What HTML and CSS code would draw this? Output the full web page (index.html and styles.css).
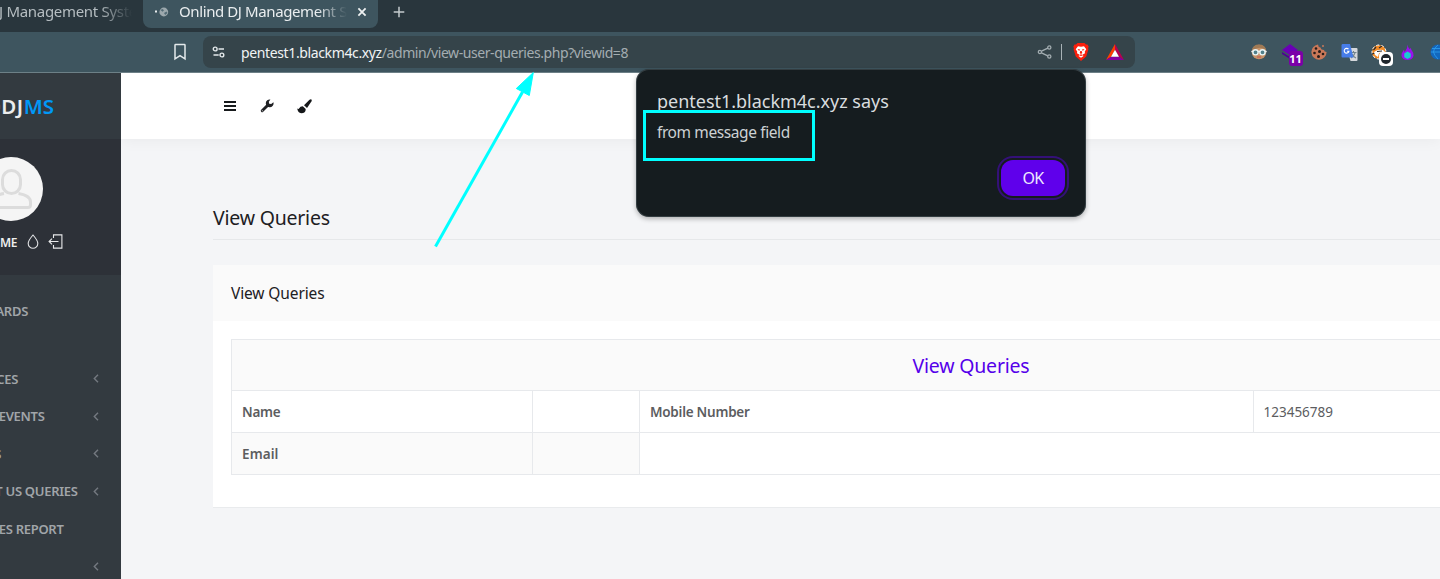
FILE: index.html
```html
<!DOCTYPE html>
<html lang="en">
<head>
<meta charset="utf-8">
<title>View Queries</title>
<link rel="stylesheet" href="styles.css">
</head>
<body>
<header class="tabs">
  <div class="tab tab-back"><span class="tab-back-title">J Management Syste</span></div>
  <div class="tab tab-active">
    <svg class="favicon" width="16" height="14" viewBox="0 0 16 14"><rect x="1" y="5.5" width="2" height="2" fill="#e8ecee"/><circle cx="9.8" cy="7" r="4.4" fill="#9ca8ad"/><path d="M6.5 5l2-1 1.5 1.3-1.5 1.5zM10 8l2.5-1.5 1 1.5-2.3 2zM9 10l1 .8" fill="#526b75"/></svg>
    <span class="tab-title">Onlind DJ Management S</span>
    <svg class="close" width="10" height="10" viewBox="0 0 10 10"><path d="M1.4 1.4l7.2 7.2M8.6 1.4L1.4 8.6" stroke="#eef1f2" stroke-width="1.8"/></svg>
  </div>
  <svg class="plus" width="12" height="12" viewBox="0 0 12 12"><path d="M6 .7v10.6M.7 6h10.6" stroke="#c3cacd" stroke-width="1.5"/></svg>
</header>
<div class="toolbar">
  <svg class="bookmark" width="14" height="18" viewBox="0 0 14 18"><path d="M2.6 1.6h8.8q.6 0 .6.6v13.6L7 12.6l-5 3.2V2.2q0-.6.6-.6z" fill="none" stroke="#e4e9eb" stroke-width="1.5"/></svg>
  <div class="address">
    <svg class="tune" width="14" height="14" viewBox="0 0 14 14" fill="none" stroke="#e4e9eb" stroke-width="1.4"><circle cx="3.2" cy="4" r="1.9"/><path d="M6.5 4H12M1.5 10h5.2"/><circle cx="9.9" cy="10" r="1.9"/></svg>
    <span class="url"><span class="host">pentest1.blackm4c.xyz</span><span class="path">/admin/view-user-queries.php?viewid=8</span></span>
    <svg class="share" width="16" height="16" viewBox="0 0 16 16" fill="none" stroke="#a3adb1" stroke-width="1.3"><path d="M4.5 7.2l6.3-3M4.5 8.8l6.3 3"/><circle cx="2.9" cy="8" r="1.6"/><circle cx="12.3" cy="3.5" r="1.6"/><circle cx="12.3" cy="12.5" r="1.6"/></svg>
    <i class="divider"></i>
    <svg class="brave" width="16" height="18" viewBox="0 0 16 18"><path d="M4.5 0h7l1.5 1.5 1.5-.1 1.2 2.3-.6 1.3.3 1.5-2.2 7L8 18l-5.200-4.500-2.200-7L.9 5 .3 3.700l1.200-2.300 1.500.1z" fill="#fb1f0c"/><path d="M5 3.200l3 .6 3-.6 2.300 3-1.500 2.300.2 1.700-2.600 1.600L10.500 13 8 14.800 5.500 13l1.100-1.200L4 10.200l.2-1.700L2.700 6.200z" fill="#fff"/><path d="M4.500 6l2.600.6-1 1.500zM11.500 6l-2.600.6 1 1.500zM7.300 8h1.400l.6 2L8 11l-1.300-1zM6 12.300l2-1 2 1-2 .6z" fill="#fb1f0c"/></svg>
    <svg class="bat" width="18" height="16" viewBox="0 0 18 16"><path d="M9 0L0 16l5-3.200 4-7z" fill="#ff3d00"/><path d="M9 0l9 16-5-3.200-4-7z" fill="#b8004f"/><path d="M0 16h18l-5-3.200H5z" fill="#8500a0"/><path d="M9 5.700l4 7.100H5z" fill="#fff"/></svg>
  </div>
  <div class="extensions">
    <svg width="16" height="16" viewBox="0 0 16 16"><circle cx="8" cy="8" r="7.300" fill="#c79369"/><path d="M1 6Q2 .5 8 .5T15 6Q10 3 7 4T1 6z" fill="#a07a55"/><path d="M.3 7.500h15.400" stroke="#eee" stroke-width="1.300"/><circle cx="4.500" cy="8.300" r="2.600" fill="#51808b" stroke="#e8f4f6" stroke-width="1.400"/><circle cx="11.500" cy="8.300" r="2.600" fill="#51808b" stroke="#e8f4f6" stroke-width="1.400"/><path d="M6 13h4" stroke="#c35252"/></svg>
    <div class="stack"><svg width="18" height="16" viewBox="0 0 18 16"><path d="M9 0l8 6-8 5-8-5z" fill="#6a00b5"/><path d="M1 8l8 5 8-5v2l-8 5-8-5z" fill="#4e0094"/></svg><b class="badge">11</b></div>
    <svg width="16" height="16" viewBox="0 0 16 16"><path d="M7 .5Q7 3 9.500 3.500 10 6 13 6q0 2 2.600 2A7.600 7.600 0 1 1 7 .5z" fill="#c97858"/><circle cx="12" cy="2" r="1" fill="#c97858"/><g fill="#271b19"><circle cx="5" cy="4.500" r="1.300"/><circle cx="8.500" cy="7.500" r="1.500"/><circle cx="3.500" cy="9" r="1.300"/><circle cx="12" cy="10" r="1.300"/><circle cx="7.500" cy="12.500" r="1.500"/></g></svg>
    <svg width="17" height="17" viewBox="0 0 17 17"><path d="M6 4h9.500q1 0 1 1v11q0 1-1 1H9.500z" fill="#d5d8dc"/><path d="M9.500 8.500h6M12.500 7v1.500M14 9q-1 3-4 5M11 10q1 2.500 4 4" fill="none" stroke="#71838b" stroke-width="1.100"/><path d="M1.500 0H9l3.500 13.500h-11q-1 0-1-1v-11Q.5 0 1.500 0z" fill="#477de9"/><path d="M7.500 5.200a2.400 2.400 0 1 0 .5 2H6" fill="none" stroke="#fff" stroke-width="1.100"/></svg>
    <div class="blocker"><svg width="16" height="16" viewBox="0 0 16 16"><circle cx="8" cy="8" r="7" fill="#f28a24" stroke="#fff" stroke-dasharray="3 2"/><path d="M2.500 6l2.500-3M8 4l3-2M1 10l3-1" fill="none" stroke="#282828" stroke-width="1.200"/><path d="M3 8q4-3 9-2l2 2-6 1-1 4-3-2z" fill="#fff"/><path d="M6 7.500l5-.5" stroke="#282828"/></svg><i class="stop"></i></div>
    <svg width="13" height="17" viewBox="0 0 14 17"><path d="M7 0q0 2.500 2.500 5l1-1.500q.3 2 1.500 3.500 2 2.500 1.500 5Q12.500 16.500 7 16.500T.5 12Q.3 9.500 2 7.500l1-2 1 2.500Q7.500 4 7 0z" fill="#9a10ed"/><path d="M7 7.500l3.500 2v4L7 15.500l-3.500-2v-4z" fill="#19cbd0"/></svg>
    <svg class="globe" width="16" height="16" viewBox="0 0 16 16"><circle cx="8" cy="8" r="7.500" fill="#1267bd"/><path d="M2 4.500h12M1 8h14M8 1Q3 5 3.500 8T8 15" fill="none" stroke="#2c9bea" stroke-width=".9"/></svg>
  </div>
</div>
<div class="page">
  <aside class="sidebar">
    <div class="brand"><span class="brand-text">ODJ<em>MS</em></span></div>
    <div class="profile">
      <div class="avatar"><svg width="64" height="64" viewBox="0 0 64 64" fill="none" stroke="#dcdcdc" stroke-width="3"><rect x="23.500" y="13.500" width="18" height="23" rx="9"/><path d="M25 36.500Q12.500 38.500 12.500 45v3q0 2.500 2.500 2.500h34q2.500 0 2.500-2.500v-3q0-6.500-12-8.500"/></svg></div>
      <div class="profile-links">
        <b class="home">ME</b>
        <svg width="12" height="15" viewBox="0 0 12 15"><path d="M6 1Q1.200 6.500 1.200 9.500a4.700 4.700 0 0 0 9.600 0Q10.800 6.500 6 1z" fill="none" stroke="#e2e3e5" stroke-width="1.100"/></svg>
        <svg width="15" height="15" viewBox="0 0 15 15"><path d="M5.500 4V.9h8.400v13.200H5.500V11M10.500 7.500H1M4 4.700L1.100 7.500 4 10.300" fill="none" stroke="#e8e9ea" stroke-width="1.100"/></svg>
      </div>
    </div>
    <nav class="menu">
      <div class="item item-first"><span class="label label-boards">ARDS</span></div>
      <div class="item"><span class="label label-services">CES</span><svg class="chev" width="6" height="9" viewBox="0 0 6 9"><path d="M5 .8L1.300 4.500 5 8.200"/></svg></div>
      <div class="item"><span class="label label-events">EVENTS</span><svg class="chev" width="6" height="9" viewBox="0 0 6 9"><path d="M5 .8L1.300 4.500 5 8.200"/></svg></div>
      <div class="item"><span class="label label-short">S</span><svg class="chev" width="6" height="9" viewBox="0 0 6 9"><path d="M5 .8L1.300 4.500 5 8.200"/></svg></div>
      <div class="item"><span class="label label-contact">T US QUERIES</span><svg class="chev" width="6" height="9" viewBox="0 0 6 9"><path d="M5 .8L1.300 4.500 5 8.200"/></svg></div>
      <div class="item"><span class="label label-report">ES REPORT</span></div>
      <div class="item"><svg class="chev" width="6" height="9" viewBox="0 0 6 9"><path d="M5 .8L1.300 4.500 5 8.200"/></svg></div>
    </nav>
  </aside>
  <main class="main">
    <div class="topbar">
      <svg width="12" height="12" viewBox="0 0 12 12"><path d="M0 2h12M0 6h12M0 10h12" stroke="#171a1c" stroke-width="2"/></svg>
      <svg width="14" height="14" viewBox="0 0 14 14"><path d="M2.200 11.800L8 6" stroke="#202124" stroke-width="2.900" stroke-linecap="round"/><path d="M13.400 3.200a3.900 3.900 0 1 1-3-2.700L8.800 2.700l.4 2 2 .4z" fill="#202124"/><circle cx="2.300" cy="11.700" r=".5" fill="#fff"/></svg>
      <svg class="brush" width="15" height="15" viewBox="0 0 15 15"><path d="M14.400.4q.7.6 0 2L10 9 7 6.200 12.500.8q1.100-1 1.900-.4z" fill="#151719"/><path d="M5.800 7.200l2.900 2.700q.1 4.300-4.500 4.300Q1 14 .2 9.500q1.500 1 2-.2.900-2.100 3.600-2.100z" fill="#151719"/></svg>
    </div>
    <div class="content">
      <h1 class="page-title">View Queries</h1>
      <section class="panel">
        <h2 class="panel-title">View Queries</h2>
        <div class="panel-body">
          <div class="grid">
            <div class="cell cell-head">View Queries</div>
            <div class="cell cell-label">Name</div><div class="cell"></div><div class="cell cell-label">Mobile Number</div><div class="cell cell-value">123456789</div>
            <div class="cell cell-label cell-alt">Email</div><div class="cell cell-alt"></div><div class="cell cell-rest"></div>
          </div>
        </div>
      </section>
    </div>
  </main>
</div>
<div class="dialog" role="alertdialog">
  <div class="dialog-title">pentest1.blackm4c.xyz says</div>
  <div class="dialog-text">from message field</div>
  <button class="ok">OK</button>
</div>
<div class="highlight"></div>
<svg class="arrow" width="104" height="180" viewBox="0 0 104 180"><path d="M5.500 176.500L92.500 22" stroke="#00ffff" stroke-width="3"/><path d="M103.300 2.500L99.300 25.500 86.300 18.500z" fill="#00ffff" stroke="#00ffff"/></svg>
</body>
</html>
```
FILE: styles.css
```css
* { box-sizing: border-box; }
body {
  margin: 0;
  width: 1440px;
  height: 579px;
  overflow: hidden;
  position: relative;
  display: flex;
  flex-direction: column;
  font-family: "Noto Sans", sans-serif;
  white-space: nowrap;
}
svg { display: block; flex: none; }
.tabs { height: 32px; flex: none; display: flex; align-items: flex-start; background: #29363d; }
.tab { height: 28px; display: flex; align-items: center; padding-bottom: 4px; font-size: 15px; letter-spacing: -.4px; }
.tab-back { width: 143px; color: #b5bdc1; }
.tab-back-title { width: 133px; margin: -2px 0 0 -1px; overflow: hidden; letter-spacing: -.3px; mask-image: linear-gradient(90deg, #000 100px, transparent 133px); }
.tab-active { width: 235px; padding-left: 11px; background: #3e555f; border-radius: 0 0 8px 8px; color: #e9edef; }
.tab-title { width: 169px; margin: -2px 0 0 9px; overflow: hidden; mask-image: linear-gradient(90deg, #000 138px, transparent 168px); }
.close { margin-left: 9px; }
.plus { margin: 6px 0 0 15px; }
.toolbar { height: 41px; flex: none; display: flex; align-items: center; overflow: hidden; background: #3e555f; border-bottom: 1px solid #6d8087; padding-left: 173px; }
.address { width: 932px; height: 32px; flex: none; margin-left: 16px; padding-left: 9px; display: flex; align-items: center; background: #35444a; border-radius: 8px; }
.url { width: 796px; margin-left: 15px; font-size: 14px; letter-spacing: -.43px; }
.host { color: #f0f3f4; letter-spacing: -.37px; }
.path { color: #a4adb1; }
.divider { width: 1px; height: 16px; margin: 0 11px 0 8px; background: #a8b2b6; }
.bat { margin-left: 17px; }
.extensions { flex: none; margin-left: 116px; display: flex; align-items: center; gap: 13.5px; }
.stack, .blocker { position: relative; }
.stack { width: 17px; }
.globe { margin-left: 3px; }
.badge { position: absolute; left: 8px; top: 7px; width: 14px; height: 15px; border-radius: 3px; background: #7a00a8; color: #fff; font: bold 11px/16px "Noto Sans", sans-serif; text-align: center; }
.stop { position: absolute; left: 8px; top: 8px; width: 14px; height: 14px; background: #fff; border-radius: 4px; }
.stop::before { content: ""; position: absolute; left: 2px; top: 2px; width: 10px; height: 10px; border-radius: 50%; background: #20272d; }
.stop::after { content: ""; position: absolute; left: 4px; top: 6px; width: 6px; height: 2px; background: #fff; }
.page { flex: 1; min-height: 0; display: flex; }
.sidebar { width: 121px; flex: none; overflow: hidden; background: #333a40; }
.brand { height: 66px; display: flex; align-items: center; justify-content: flex-end; padding: 0 67px 0 0; font-size: 20.5px; font-weight: 600; color: #eceded; }
.brand-text { letter-spacing: .5px; }
.brand em { font-style: normal; letter-spacing: 0; color: #0098f7; }
.profile { height: 136px; background: #2d3138; padding-top: 18px; }
.avatar { width: 64px; height: 64px; margin-left: -21px; border-radius: 50%; background: #f5f5f5; }
.profile-links { margin-top: 11px; display: flex; align-items: center; gap: 9px; color: #eee; }
.home { width: 18px; font-size: 12px; font-weight: 600; letter-spacing: -.3px; margin-top: 2px; }
.menu { padding-top: 17.5px; }
.item { height: 37.5px; display: flex; align-items: center; color: #a1a5a9; font-size: 13px; font-weight: 600; }
.item-first { margin-bottom: 30px; }
.label { display: flex; justify-content: flex-end; letter-spacing: -.3px; }
.label-boards { width: 28px; }
.label-services { width: 18px; }
.label-events { width: 44.5px; }
.label-short { width: 1px; }
.label-contact { width: 77.5px; }
.label-report { width: 63.5px; }
.chev { margin: 0 22px 0 auto; fill: none; stroke: #747980; stroke-width: 1.4; }
.main { flex: 1; min-width: 0; overflow: hidden; background: #f4f5f7; }
.topbar { height: 66px; display: flex; align-items: center; gap: 24px; padding-left: 103px; background: #fff; box-shadow: 0 1px 15px rgba(0, 0, 0, .05); }
.brush { margin-left: -1px; }
.content { padding: 60px 0 0 92px; }
.page-title { margin: 0 0 25px; height: 41px; border-bottom: 1px solid #e6e8ea; color: #1d2023; font-size: 19.5px; font-weight: 400; line-height: 37px; letter-spacing: -.22px; }
.panel { background: #fff; border-bottom: 1px solid #e9ebed; height: 243px; }
.panel-title { margin: 0; height: 56px; padding-left: 18px; background: #fafafa; color: #1d2023; font-size: 15.5px; font-weight: 400; line-height: 57px; letter-spacing: -.12px; }
.panel-body { padding: 18px 0 0 18px; }
.grid { width: 1481px; display: grid; grid-template-columns: 301px 107px 614px 1fr; grid-template-rows: 51px 42px 42px; border: solid #e7e9ec; border-width: 1px 0 0 1px; }
.cell { border: solid #e7e9ec; border-width: 0 1px 1px 0; padding-left: 10px; font-size: 13.5px; line-height: 42px; color: #5c5d5f; }
.cell-head { grid-column: 1 / -1; padding: 0 1px 0 0; background: #fafafa; color: #5500ea; font-size: 19.5px; line-height: 52px; letter-spacing: -.2px; text-align: center; }
.cell-label { font-weight: 600; letter-spacing: -.25px; }
.cell-label.cell-alt { letter-spacing: .1px; }
.cell-value { padding-left: 9.5px; }
.cell-alt { background: #fafafa; }
.cell-rest { grid-column: 3 / -1; }
.dialog { position: absolute; left: 636px; top: 69px; width: 450px; height: 148px; display: flex; flex-direction: column; padding: 21px 20px 20px 21px; background: #151c1f; border-radius: 13px; box-shadow: inset 0 0 0 1px rgba(110, 122, 128, .35), 0 2px 5px rgba(0, 0, 0, .28); color: #d9dddf; }
.dialog-title { height: 24px; font-size: 18px; line-height: 23px; letter-spacing: -.02px; }
.dialog-text { height: 38px; font-size: 15.5px; line-height: 36px; letter-spacing: -.4px; color: #ccd1d3; }
.ok { width: 64px; height: 36px; margin: 8px 1px 0 auto; padding: 0; border: 0; border-radius: 12px; background: #5f00eb; box-shadow: 0 0 0 2px #151c1f, 0 0 0 4px #341078; color: #eee8ff; font: 16px "Noto Sans", sans-serif; letter-spacing: -.7px; }
.highlight { position: absolute; left: 643px; top: 110px; width: 172px; height: 51px; border: 3px solid #00ffff; }
.arrow { position: absolute; left: 430px; top: 70px; }
```
